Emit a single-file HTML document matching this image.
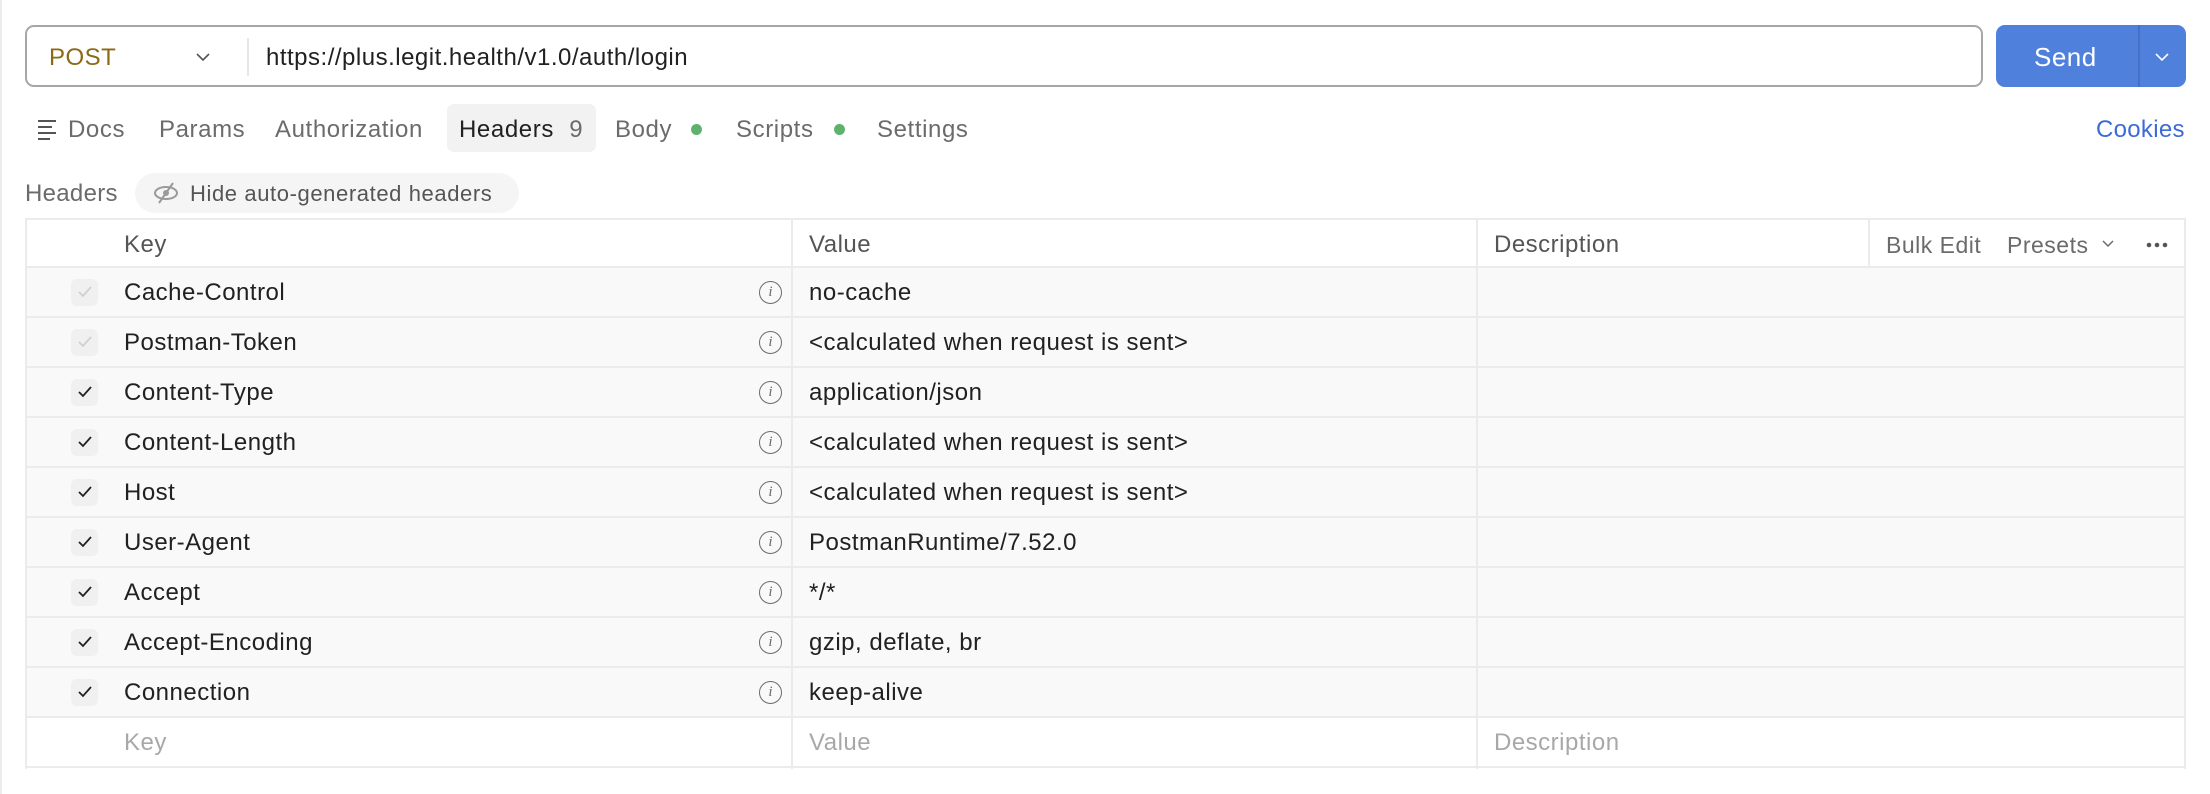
<!DOCTYPE html>
<html><head><meta charset="utf-8"><style>
*{box-sizing:border-box;margin:0;padding:0}
body{width:2210px;height:794px;background:#fff;font-family:"Liberation Sans",sans-serif;color:#212121;position:relative;overflow:hidden}
.a{position:absolute;white-space:nowrap}
.url{left:25px;top:25px;width:1958px;height:62px;border:2px solid #a6a6a6;border-radius:9px}
.send{left:1996px;top:25px;width:190px;height:62px;background:#4e80dc;border-radius:9px}
.tab{top:115px;font-size:24px;color:#6b6b6b;line-height:30px;letter-spacing:0.6px}
.row{position:absolute;left:25px;width:2161px;height:50px;border-bottom:2px solid #ebebeb;background:#f9f9f9}
.cell{position:absolute;top:1px;height:100%;line-height:48px;font-size:24px;letter-spacing:0.5px}
.cb{position:absolute;left:46px;top:11px;width:27px;height:27px;border-radius:6px;background:#f0f0f0}
.info{position:absolute;left:734px;top:13px;width:23px;height:23px;border:1.5px solid #6b6b6b;border-radius:50%;font-size:15px;line-height:20px;text-align:center;font-style:italic;color:#6b6b6b;font-family:"Liberation Serif",serif}
</style></head><body>
<div class="a" style="left:0;top:0;width:2px;height:794px;background:#ececec"></div>
<div class="a url"></div>
<div class="a" style="left:49px;top:42px;font-size:24px;color:#8c6a14;line-height:32px;letter-spacing:0.5px">POST</div>
<svg class="a" style="left:196px;top:52px" width="14" height="10"><path d="M1 2l6 6 6-6" fill="none" stroke="#555" stroke-width="1.6"/></svg>
<div class="a" style="left:247px;top:38px;width:2px;height:38px;background:#e6e6e6"></div>
<div class="a" style="left:266px;top:42px;font-size:24px;line-height:32px;letter-spacing:0.5px">https://plus.legit.health/v1.0/auth/login</div>
<div class="a send"></div>
<div class="a" style="left:2138px;top:25px;width:2px;height:62px;background:#4371c6"></div>
<div class="a" style="left:2034px;top:41px;font-size:26px;color:#fff;line-height:32px;letter-spacing:0.5px">Send</div>
<svg class="a" style="left:2155px;top:52px" width="14" height="10"><path d="M1 2l6 6 6-6" fill="none" stroke="#fff" stroke-width="1.6"/></svg>

<svg class="a" style="left:38px;top:119px" width="20" height="22"><path d="M0 2h18M0 8h14M0 14h18M0 20h12" stroke="#555" stroke-width="2"/></svg>
<div class="a tab" style="left:68px">Docs</div>
<div class="a tab" style="left:159px">Params</div>
<div class="a tab" style="left:275px">Authorization</div>
<div class="a" style="left:447px;top:104px;width:149px;height:48px;background:#f2f2f2;border-radius:7px"></div>
<div class="a tab" style="left:459px;color:#212121">Headers <span style="color:#6b6b6b;margin-left:8px">9</span></div>
<div class="a tab" style="left:615px">Body</div>
<div class="a" style="left:691px;top:124px;width:11px;height:11px;border-radius:50%;background:#5db36d"></div>
<div class="a tab" style="left:736px">Scripts</div>
<div class="a" style="left:834px;top:124px;width:11px;height:11px;border-radius:50%;background:#5db36d"></div>
<div class="a tab" style="left:877px">Settings</div>
<div class="a tab" style="left:2096px;color:#3d6bd6;letter-spacing:0.3px">Cookies</div>

<div class="a" style="left:25px;top:179px;font-size:24px;color:#6b6b6b;line-height:30px;letter-spacing:0.3px">Headers</div>
<div class="a" style="left:135px;top:173px;width:384px;height:40px;background:#f5f5f5;border-radius:20px"></div>
<svg class="a" style="left:153px;top:182px" width="26" height="22"><ellipse cx="13" cy="11" rx="11" ry="6" fill="none" stroke="#9a9a9a" stroke-width="2"/><circle cx="13" cy="11" r="3" fill="#9a9a9a"/><path d="M20 1L6 21" stroke="#9a9a9a" stroke-width="2"/></svg>
<div class="a" style="left:190px;top:179px;font-size:22px;color:#555;line-height:30px;letter-spacing:0.6px">Hide auto-generated headers</div>

<div class="row" style="top:218px;height:50px;background:#fff;border-top:2px solid #ebebeb">
<div class="cell" style="left:99px;color:#555">Key</div><div class="cell" style="left:784px;color:#555">Value</div><div class="cell" style="left:1469px;color:#555">Description</div>
<div class="cell" style="left:1861px;color:#6b6b6b;font-size:23px">Bulk Edit</div><div class="cell" style="left:1982px;color:#6b6b6b;font-size:23px">Presets</div>
<svg class="a" style="left:2077px;top:20px" width="12" height="9"><path d="M1 1l5 5 5-5" fill="none" stroke="#6b6b6b" stroke-width="1.5"/></svg>
<svg class="a" style="left:2121px;top:22px" width="22" height="6"><circle cx="3" cy="3" r="2.3" fill="#555"/><circle cx="11" cy="3" r="2.3" fill="#555"/><circle cx="19" cy="3" r="2.3" fill="#555"/></svg>
<div class="a" style="left:1843px;top:0;bottom:0;width:2px;background:#ebebeb"></div>
</div>

<div class="row" style="top:268px"><div class="cb"></div><svg class="a" style="left:52px;top:17px" width="16" height="14"><path d="M2 7l4 4 8-9" fill="none" stroke="#d0d0d0" stroke-width="1.8"/></svg><div class="cell" style="left:99px">Cache-Control</div><div class="info">i</div><div class="cell" style="left:784px">no-cache</div></div>
<div class="row" style="top:318px"><div class="cb"></div><svg class="a" style="left:52px;top:17px" width="16" height="14"><path d="M2 7l4 4 8-9" fill="none" stroke="#d0d0d0" stroke-width="1.8"/></svg><div class="cell" style="left:99px">Postman-Token</div><div class="info">i</div><div class="cell" style="left:784px">&lt;calculated when request is sent&gt;</div></div>
<div class="row" style="top:368px"><div class="cb"></div><svg class="a" style="left:52px;top:17px" width="16" height="14"><path d="M2 7l4 4 8-9" fill="none" stroke="#212121" stroke-width="1.8"/></svg><div class="cell" style="left:99px">Content-Type</div><div class="info">i</div><div class="cell" style="left:784px">application/json</div></div>
<div class="row" style="top:418px"><div class="cb"></div><svg class="a" style="left:52px;top:17px" width="16" height="14"><path d="M2 7l4 4 8-9" fill="none" stroke="#212121" stroke-width="1.8"/></svg><div class="cell" style="left:99px">Content-Length</div><div class="info">i</div><div class="cell" style="left:784px">&lt;calculated when request is sent&gt;</div></div>
<div class="row" style="top:468px"><div class="cb"></div><svg class="a" style="left:52px;top:17px" width="16" height="14"><path d="M2 7l4 4 8-9" fill="none" stroke="#212121" stroke-width="1.8"/></svg><div class="cell" style="left:99px">Host</div><div class="info">i</div><div class="cell" style="left:784px">&lt;calculated when request is sent&gt;</div></div>
<div class="row" style="top:518px"><div class="cb"></div><svg class="a" style="left:52px;top:17px" width="16" height="14"><path d="M2 7l4 4 8-9" fill="none" stroke="#212121" stroke-width="1.8"/></svg><div class="cell" style="left:99px">User-Agent</div><div class="info">i</div><div class="cell" style="left:784px">PostmanRuntime/7.52.0</div></div>
<div class="row" style="top:568px"><div class="cb"></div><svg class="a" style="left:52px;top:17px" width="16" height="14"><path d="M2 7l4 4 8-9" fill="none" stroke="#212121" stroke-width="1.8"/></svg><div class="cell" style="left:99px">Accept</div><div class="info">i</div><div class="cell" style="left:784px">*/*</div></div>
<div class="row" style="top:618px"><div class="cb"></div><svg class="a" style="left:52px;top:17px" width="16" height="14"><path d="M2 7l4 4 8-9" fill="none" stroke="#212121" stroke-width="1.8"/></svg><div class="cell" style="left:99px">Accept-Encoding</div><div class="info">i</div><div class="cell" style="left:784px">gzip, deflate, br</div></div>
<div class="row" style="top:668px"><div class="cb"></div><svg class="a" style="left:52px;top:17px" width="16" height="14"><path d="M2 7l4 4 8-9" fill="none" stroke="#212121" stroke-width="1.8"/></svg><div class="cell" style="left:99px">Connection</div><div class="info">i</div><div class="cell" style="left:784px">keep-alive</div></div>
<div class="row" style="top:718px;background:#fff"><div class="cell" style="left:99px;color:#a8a8a8">Key</div><div class="cell" style="left:784px;color:#a8a8a8">Value</div><div class="cell" style="left:1469px;color:#a8a8a8">Description</div></div>
<div class="a" style="left:25px;top:218px;width:2px;height:551px;background:#ebebeb"></div>
<div class="a" style="left:2184px;top:218px;width:2px;height:551px;background:#ebebeb"></div>
<div class="a" style="left:791px;top:218px;width:2px;height:551px;background:#ebebeb"></div>
<div class="a" style="left:1476px;top:218px;width:2px;height:551px;background:#ebebeb"></div>
</body></html>
